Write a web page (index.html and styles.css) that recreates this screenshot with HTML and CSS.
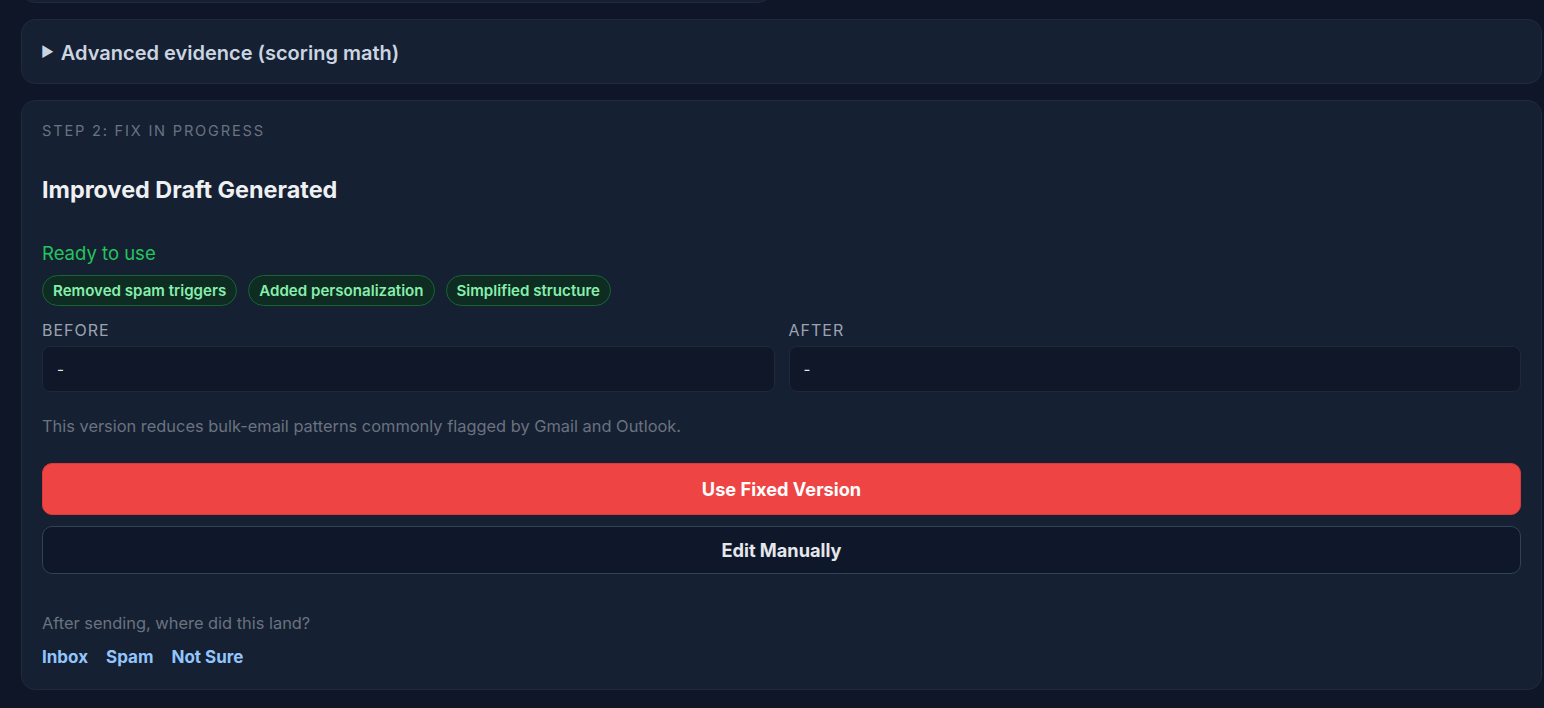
FILE: index.html
```html
<!DOCTYPE html>
<html>
<head>
<meta charset="utf-8">
<link rel="stylesheet" href="styles.css">
</head>
<body>
<div class="page">
  <div class="card prev-card"></div>
  <div class="card details-card">
    <span class="caret">&#9654;</span>
    <span class="details-title">Advanced evidence (scoring math)</span>
  </div>
  <div class="card main-card">
    <div class="step">STEP 2: FIX IN PROGRESS</div>
    <h2 class="title">Improved Draft Generated</h2>
    <div class="ready">Ready to use</div>
    <div class="chips">
      <span class="chip">Removed spam triggers</span>
      <span class="chip">Added personalization</span>
      <span class="chip">Simplified structure</span>
    </div>
    <div class="compare">
      <div class="col">
        <div class="col-label">BEFORE</div>
        <div class="box">-</div>
      </div>
      <div class="col">
        <div class="col-label">AFTER</div>
        <div class="box">-</div>
      </div>
    </div>
    <p class="note">This version reduces bulk-email patterns commonly flagged by Gmail and Outlook.</p>
    <button class="btn btn-primary">Use Fixed Version</button>
    <button class="btn btn-secondary">Edit Manually</button>
    <p class="question">After sending, where did this land?</p>
    <div class="links">
      <a class="link">Inbox</a>
      <a class="link">Spam</a>
      <a class="link">Not Sure</a>
    </div>
  </div>
</div>
</body>
</html>
```

FILE: styles.css
```css
html, body {
  margin: 0;
  padding: 0;
  background: #0f1627;
  font-family: Inter, "Noto Sans", "Liberation Sans", sans-serif;
  color: #e5e7eb;
}
.page {
  display: flex;
  flex-direction: column;
  gap: 16px;
  padding: 0 2px 19px 21px;
}
.card {
  background: #152032;
  border: 1px solid #1f2a3c;
  border-radius: 14px;
  box-sizing: border-box;
}
.prev-card {
  width: 751px;
  height: 40px;
  margin-top: -37px;
}
.details-card {
  height: 65px;
  display: flex;
  align-items: center;
  padding: 3px 19px 0 19px;
  gap: 7px;
}
.caret {
  font-size: 14px;
  color: #cbd5e1;
  line-height: 1;
  position: relative;
  top: -1px;
}
.details-title {
  font-size: 20px;
  font-weight: 600;
  color: #cbd5e1;
}
.main-card {
  padding: 20px;
  height: 590px;
}
.step {
  font-size: 14.6px;
  letter-spacing: 1.8px;
  color: #6b7280;
  line-height: 20px;
}
.title {
  margin: 34px 0 0 0;
  font-size: 23.4px;
  font-weight: 700;
  color: #eef0f3;
  line-height: 30px;
}
.ready {
  margin-top: 36px;
  font-size: 18.5px;
  color: #22c55e;
  line-height: 24px;
}
.chips {
  display: flex;
  gap: 11px;
  margin-top: 10px;
}
.chip {
  height: 31px;
  box-sizing: border-box;
  display: inline-flex;
  align-items: center;
  padding: 0 10px;
  border-radius: 16px;
  background: #0e2c21;
  border: 1px solid #166534;
  color: #86efac;
  font-size: 15.1px;
  font-weight: 600;
}
.compare {
  display: flex;
  gap: 14px;
  margin-top: 13px;
}
.col {
  flex: 1;
  min-width: 0;
}
.col-label {
  font-size: 16px;
  letter-spacing: 1px;
  color: #9ca3af;
  line-height: 22px;
}
.box {
  margin-top: 5px;
  height: 46px;
  box-sizing: border-box;
  background: #0f1729;
  border: 1px solid #1e293b;
  border-radius: 8px;
  padding: 0 14px;
  display: flex;
  align-items: center;
  color: #e5e7eb;
  font-size: 15px;
}
.note {
  margin: 23px 0 0 0;
  font-size: 16.4px;
  color: #6b7280;
  line-height: 22px;
}
.btn {
  display: flex;
  align-items: center;
  justify-content: center;
  width: 100%;
  box-sizing: border-box;
  border-radius: 10px;
  font-family: inherit;
  font-size: 18.2px;
  font-weight: 700;
}
.btn-primary {
  margin-top: 26px;
  height: 52px;
  background: #ef4444;
  border: 1px solid #dc3a3a;
  color: #ffffff;
}
.btn-secondary {
  margin-top: 11px;
  height: 48px;
  background: #0f172a;
  border: 1px solid #334155;
  color: #e5e7eb;
}
.question {
  margin: 38px 0 0 0;
  font-size: 16.4px;
  color: #6b7280;
  line-height: 22px;
}
.links {
  display: flex;
  gap: 18px;
  margin-top: 11px;
}
.link {
  font-size: 17px;
  font-weight: 700;
  color: #93c5fd;
  line-height: 24px;
  cursor: pointer;
}
```
